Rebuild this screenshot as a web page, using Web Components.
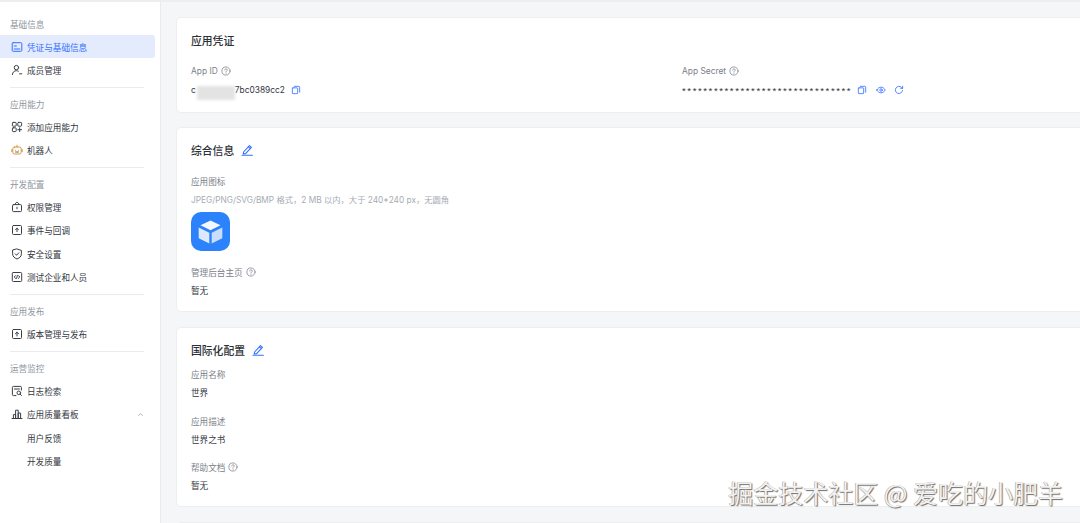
<!DOCTYPE html>
<html lang="zh">
<head>
<meta charset="utf-8">
<title>凭证与基础信息</title>
<style>
  html, body { margin: 0; height: 100%; overflow: hidden; }
  body { font-family: "Noto Sans CJK SC", Inter, sans-serif; color: #1f2329; }
</style>
</head>
<body>
<app-shell>
  <side-nav slot="nav">
    <nav-group label="基础信息">
      <nav-item active icon="card">凭证与基础信息</nav-item>
      <nav-item icon="member">成员管理</nav-item>
    </nav-group>
    <nav-group label="应用能力">
      <nav-item icon="apps">添加应用能力</nav-item>
      <nav-item icon="bot">机器人</nav-item>
    </nav-group>
    <nav-group label="开发配置">
      <nav-item icon="lock">权限管理</nav-item>
      <nav-item icon="event">事件与回调</nav-item>
      <nav-item icon="shield">安全设置</nav-item>
      <nav-item icon="code">测试企业和人员</nav-item>
    </nav-group>
    <nav-group label="应用发布">
      <nav-item icon="upload">版本管理与发布</nav-item>
    </nav-group>
    <nav-group label="运营监控" last>
      <nav-item icon="log">日志检索</nav-item>
      <nav-item icon="chart" expanded>应用质量看板</nav-item>
      <nav-item>用户反馈</nav-item>
      <nav-item>开发质量</nav-item>
    </nav-group>
  </side-nav>

  <info-card title="应用凭证" style="--title-gap:14px;--pad-bottom:15px;--label-font:Inter,sans-serif;--label-size:8.400px">
    <div style="display:grid;grid-template-columns:491px 1fr">
      <info-field label="App ID" help>
        <span style="font-family:Inter,sans-serif;font-size:8.400px">c</span>
        <blur-patch></blur-patch>
        <span style="font-family:Inter,sans-serif;font-size:8.400px">7bc0389cc2</span>
        <icon-btn name="copy" style="margin-left:6px"></icon-btn>
      </info-field>
      <info-field label="App Secret" help>
        <span style="font-family:'Liberation Sans',sans-serif;font-size:9.500px;letter-spacing:1.620px;padding-top:2px">********************************</span>
        <icon-btn name="copy" style="margin-left:5px"></icon-btn>
        <icon-btn name="eye" style="margin-left:9px"></icon-btn>
        <icon-btn name="refresh" style="margin-left:8px"></icon-btn>
      </info-field>
    </div>
  </info-card>

  <info-card title="综合信息" editable style="--title-gap:14px;--pad-bottom:14.500px;--value-gap:4.500px">
    <info-field label="应用图标">
      <div style="display:flex;flex-direction:column;gap:5px">
        <span style="color:#a6abb3;line-height:14px;font-size:8.300px;font-family:Inter,'Noto Sans CJK SC',sans-serif">JPEG/PNG/SVG/BMP 格式，2 MB 以内，大于 240*240 px，无圆角</span>
        <app-logo></app-logo>
      </div>
    </info-field>
    <info-field label="管理后台主页" help style="margin-top:14px;--value-gap:4px">暂无</info-field>
  </info-card>

  <info-card title="国际化配置" editable style="--title-gap:7px;--pad-bottom:14.500px;--value-gap:4px">
    <info-field label="应用名称">世界</info-field>
    <info-field label="应用描述" style="margin-top:15px">世界之书</info-field>
    <info-field label="帮助文档" help style="margin-top:14px">暂无</info-field>
  </info-card>

  <info-card></info-card>
</app-shell>

<script>
// stroke paths for the 12x12 icons used in the sidebar and on the cards
const ICONS = {
  card: '<rect x="1.2" y="1.700" width="9.600" height="8.600" rx="1"/><path d="M3.200 5h2.200M3.200 8h5.600"/>',
  member: '<circle cx="5.400" cy="3.600" r="2.200"/><path d="M1.400 10.600c.2-2.600 1.900-3.900 4-3.900 .8 0 1.400.2 2 .5M8.600 9.800h2.200"/>',
  apps: '<rect x="1.400" y="1.400" width="3.800" height="3.800" rx=".8"/><rect x="6.800" y="1.400" width="3.800" height="3.800" rx=".8"/><rect x="1.400" y="6.800" width="3.800" height="3.800" rx=".8"/><path d="M8.700 6.800v3.800M6.800 8.700h3.800"/>',
  bot: '<rect x="1.800" y="3" width="8.400" height="7" rx="1.800" stroke="#d9963f"/><path d="M6 1.200V3M.8 5.600v2M11.200 5.600v2M4.400 6.400h.01M7.600 6.400h.01" stroke="#d9963f"/><path d="M4.600 8h2.800" stroke="#5a6068"/>',
  lock: '<rect x="1.500" y="3.600" width="9" height="7" rx="1"/><path d="M4.200 3.600c0-1.400.6-2.200 1.800-2.200s1.800.8 1.800 2.200M6 6.200v1.600"/>',
  event: '<rect x="1.500" y="1.500" width="9" height="9" rx="1"/><path d="M6 4.200v3.400M4.600 5.600 6 4.200l1.400 1.400"/>',
  shield: '<path d="M6 1 10.400 2.400v3.400c0 2.600-1.800 4.200-4.400 5.200C3.400 10 1.600 8.400 1.600 5.800V2.400z"/><path d="M4.200 5.800 5.600 7.200 7.800 4.800"/>',
  code: '<rect x="1.300" y="1.500" width="9.400" height="9" rx="1"/><path d="M4.600 4.600 3.200 6l1.400 1.400M7.400 4.600 8.800 6 7.400 7.400M6.400 4.600l-.8 2.800"/>',
  upload: '<rect x="1.500" y="1.500" width="9" height="9" rx="1"/><path d="M6 8V4.200M4.400 5.800 6 4.200l1.600 1.600"/>',
  log: '<path d="M10.400 5V2.400a1 1 0 0 0-1-1H2.400a1 1 0 0 0-1 1v7.200a1 1 0 0 0 1 1H5M3.400 4h5"/><circle cx="7.800" cy="7.800" r="1.800"/><path d="M9.200 9.200l1.200 1.200"/>',
  chart: '<path d="M1 10.500h10M2.400 10.500V6.600h2.200v3.900M4.600 10.500V2.200h2.600v8.300M7.200 10.500V5h2.400v5.500"/>',
  copy: '<rect x="1.600" y="3.400" width="6.400" height="7" rx=".8"/><path d="M4 1.600h5.400a1 1 0 0 1 1 1v6"/>',
  eye: '<path d="M1 6c1.300-2.300 3-3.400 5-3.400S9.700 3.700 11 6c-1.300 2.300-3 3.400-5 3.400S2.300 8.300 1 6z"/><circle cx="6" cy="6" r="1.500"/>',
  refresh: '<path d="M10.200 6.600A4.300 4.300 0 1 1 8.900 2.800L10.300 4M10.400 1.500V4H7.900"/>',
  help: '<circle cx="6" cy="6" r="4.900"/><path d="M4.500 4.800c0-.9.700-1.500 1.500-1.500s1.500.6 1.500 1.400c0 1.100-1.500 1.200-1.500 2.300M6 8.500v.3"/>',
  pen: '<path d="M2.600 8 8.400 1.600l2 1.800-5.800 6.200-2.400.4zM7.400 2.800l2 1.800"/><path d="M1 11.200h10.400"/>',
  up: '<path d="M3.500 7.300 6 4.800l2.500 2.500"/>'
}

const svgIcon = (name, size, color, weight = 1) =>
  `<svg width="${size}" height="${size}" viewBox="0 0 12 12" fill="none" stroke="${color}" stroke-width="${weight}" stroke-linecap="round" stroke-linejoin="round" style="display:block;flex:none">${ICONS[name] || ''}</svg>`

customElements.define('app-shell', class extends HTMLElement {
  constructor() {
    super()
    this.attachShadow({ mode: 'open' }).innerHTML = `
      <style>
        :host { display: flex; height: 100vh; overflow: hidden; background: #f5f6f7; box-sizing: border-box; border-top: 2px solid #eceef0; position: relative; }
        .main { flex: 1; min-width: 0; display: flex; flex-direction: column; gap: 14.500px; padding: 15px 0 0 15px; margin-right: -12px; }
        .mark { position: absolute; right: 17px; top: 475px; font: 400 25px/30px "Noto Sans CJK SC", sans-serif; color: #f2f2f2; white-space: pre;
                text-shadow: 1px 1px 1px #6d6d6d, -.5px -.5px 0 #a0a0a0; }
      </style>
      <slot name="nav"></slot>
      <div class="main"><slot></slot></div>
      <div class="mark">掘金技术社区 @ 爱吃的小肥羊</div>`
  }
})

customElements.define('side-nav', class extends HTMLElement {
  constructor() {
    super()
    this.attachShadow({ mode: 'open' }).innerHTML = `
      <style>
        :host { display: block; flex: none; width: 161px; box-sizing: border-box; height: 100%; background: #fff; border-right: 1px solid #e9ebee; padding: 14px 5px 0 0; }
      </style>
      <slot></slot>`
  }
})

customElements.define('nav-group', class extends HTMLElement {
  constructor() {
    super()
    const last = this.hasAttribute('last')
    this.attachShadow({ mode: 'open' }).innerHTML = `
      <style>
        :host { display: block; }
        .label { height: 16px; line-height: 16px; padding-left: 10px; font-size: 8.600px; color: #8f959e; margin-bottom: 3px; }
        .rule { height: 1px; background: #e9ebee; margin: 5px 0 8.400px 10px; width: 134px; }
      </style>
      <div class="label">${this.getAttribute('label')}</div>
      <slot></slot>
      ${last ? '' : '<div class="rule"></div>'}`
  }
})

customElements.define('nav-item', class extends HTMLElement {
  constructor() {
    super()
    const active = this.hasAttribute('active')
    const name = this.getAttribute('icon')
    const color = active ? '#3370ff' : '#3a3f47'
    this.attachShadow({ mode: 'open' }).innerHTML = `
      <style>
        :host { display: flex; align-items: center; gap: 4.500px; height: 23.400px; box-sizing: border-box; padding: 0 10px 0 10.500px; font-size: 8.600px; color: #33373e; }
        :host([active]) { color: #3370ff; background: #e4ebfc; border-radius: 0 3px 3px 0; }
        .gap { width: 12px; flex: none; }
        .chev { margin-left: auto; }
      </style>
      ${name ? svgIcon(name, 12, color) : '<span class="gap"></span>'}
      <slot></slot>
      ${this.hasAttribute('expanded') ? `<span class="chev">${svgIcon('up', 9, '#8f959e')}</span>` : ''}`
  }
})

customElements.define('info-card', class extends HTMLElement {
  constructor() {
    super()
    const title = this.getAttribute('title')
    this.removeAttribute('title')
    const pen = this.hasAttribute('editable') ? svgIcon('pen', 12, '#3370ff', 1.100) : ''
    this.attachShadow({ mode: 'open' }).innerHTML = `
      <style>
        :host { display: block; flex: none; background: #fff; border: 1px solid #eceef0; border-radius: 5px; padding: 14px 14px var(--pad-bottom, 14px) 14px; box-sizing: border-box; }
        .head { display: ${title ? 'flex' : 'none'}; align-items: center; gap: 7px; height: 18px; box-sizing: border-box; padding-bottom: 2px; margin-bottom: var(--title-gap, 14px); font-size: 10.800px; font-weight: 500; color: #2b2f36; }
      </style>
      <div class="head">${title || ''}${pen}</div>
      <slot></slot>`
  }
})

customElements.define('info-field', class extends HTMLElement {
  constructor() {
    super()
    const help = this.hasAttribute('help') ? svgIcon('help', 10, '#7b8088', .9) : ''
    this.attachShadow({ mode: 'open' }).innerHTML = `
      <style>
        :host { display: block; font-size: 8.600px; }
        .label { display: flex; align-items: center; gap: 3px; height: 14px; color: #7b8088; font-family: var(--label-font, "Noto Sans CJK SC", sans-serif); font-size: var(--label-size, 8.600px); }
        .value { display: flex; align-items: center; min-height: 14px; margin-top: var(--value-gap, 4.500px); color: #33373e; }
      </style>
      <div class="label">${this.getAttribute('label')}${help}</div>
      <div class="value"><slot></slot></div>`
  }
})

customElements.define('icon-btn', class extends HTMLElement {
  constructor() {
    super()
    this.attachShadow({ mode: 'open' }).innerHTML = `
      <style>:host { display: inline-flex; }</style>
      ${svgIcon(this.getAttribute('name'), 10, '#3370ff')}`
  }
})

// grey smudge hiding part of the App ID
customElements.define('blur-patch', class extends HTMLElement {
  constructor() {
    super()
    this.attachShadow({ mode: 'open' }).innerHTML = `
      <style>
        :host { display: block; flex: none; width: 38px; height: 14px; margin-left: 1px; background: #e3e3e3; filter: blur(1.500px); transform: translateY(3px); }
      </style>`
  }
})

customElements.define('app-logo', class extends HTMLElement {
  constructor() {
    super()
    this.attachShadow({ mode: 'open' }).innerHTML = `
      <style>
        :host { display: block; width: 39px; height: 39px; border-radius: 10px; background: #2b82fb; }
        svg { display: block; }
      </style>
      <svg width="39" height="39" viewBox="0 0 39 39">
        <path d="M19.500 8.500 29.500 13.300 19.500 18.200 9.500 13.300z" fill="#f3f8ff"/>
        <path d="M7.700 15.500 18.300 20.700V31.500L7.700 26.200z" fill="#dce9fd"/>
        <path d="M31.300 15.500 20.700 20.700V31.500L31.300 26.200z" fill="#c9defc"/>
      </svg>`
  }
})
</script>
</body>
</html>
